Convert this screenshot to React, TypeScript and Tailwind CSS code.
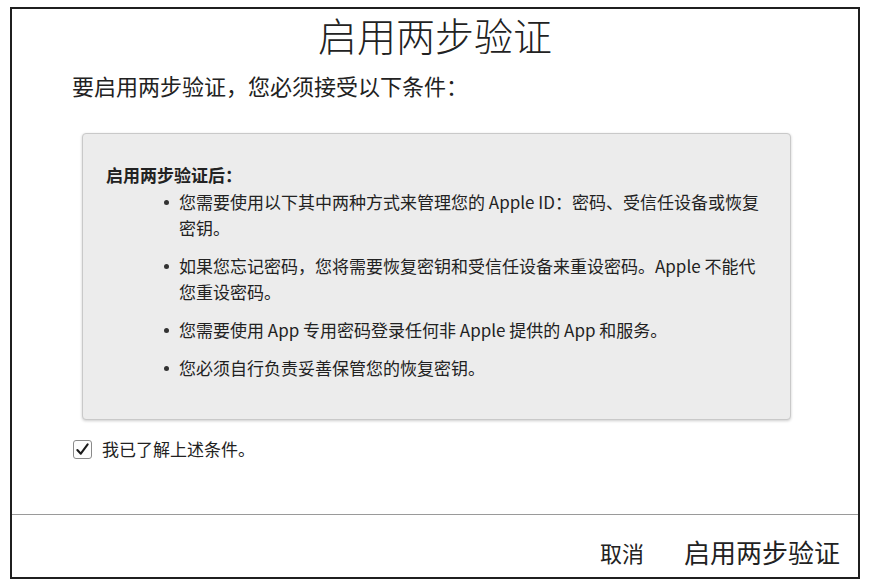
import React from 'react';

const items = [
  '您需要使用以下其中两种方式来管理您的 Apple ID：密码、受信任设备或恢复密钥。',
  '如果您忘记密码，您将需要恢复密钥和受信任设备来重设密码。Apple 不能代您重设密码。',
  '您需要使用 App 专用密码登录任何非 Apple 提供的 App 和服务。',
  '您必须自行负责妥善保管您的恢复密钥。',
];

const App: React.FC = () => {
  return (
    <div className="w-[870px] h-[586px] bg-white pt-[7px] pl-[10px] text-[#222] font-['Noto_Sans_CJK_SC','Noto_Sans',sans-serif]">
      <div className="w-[850px] h-[572px] border-2 border-[#1f1f1f] flex flex-col">
        {/* 标题 */}
        <h1 className="pt-[3px] text-center text-[39px] leading-[44px] font-light">启用两步验证</h1>
        <p className="mt-[15px] pl-[60px] text-[22px] leading-[28px]">要启用两步验证，您必须接受以下条件：</p>

        {/* 条件框 */}
        <div className="mt-[34px] ml-[70px] w-[709px] h-[287px] bg-[#ececec] border border-[#c9c9c9] rounded-[4px] shadow-[0_1px_3px_rgba(0,0,0,0.2)] pt-[29px] pl-[23px]">
          <h2 className="text-[17px] leading-[24px] font-bold">启用两步验证后：</h2>
          <ul className="mt-[2px]">
            {items.map((t, i) => (
              <li key={i} className={`flex items-start ${i > 0 ? 'mt-[12px]' : ''}`}>
                <span className="ml-[58px] mt-[11px] w-[5px] h-[5px] rounded-full bg-[#333] shrink-0" />
                <span className="ml-[10px] w-[584px] text-[17px] leading-[26px]">{t}</span>
              </li>
            ))}
          </ul>
        </div>

        {/* 复选框 */}
        <label className="mt-[17px] ml-[61px] flex items-center gap-[10px]">
          <span className="w-[19px] h-[19px] rounded-[3px] border border-[#8a8a8a] bg-[#fdfdfd] flex items-center justify-center">
            <svg width="15" height="15" viewBox="0 0 16 16" fill="none">
              <path d="M2.5 8.5 L6.2 12.5 L13.5 2.5" stroke="#1a1a1a" strokeWidth="2.2" strokeLinecap="round" strokeLinejoin="round" />
            </svg>
          </span>
          <span className="text-[17px] leading-[24px]">我已了解上述条件。</span>
        </label>

        <div className="mt-auto h-[63px] border-t border-[#9a9a9a] flex items-center justify-end pr-[18px] gap-[40px]">
          <button className="text-[22px] leading-[28px] mt-[12px]">取消</button>
          <button className="text-[26px] leading-[28px] mt-[12px]">启用两步验证</button>
        </div>
      </div>
    </div>
  );
};

export default App;
